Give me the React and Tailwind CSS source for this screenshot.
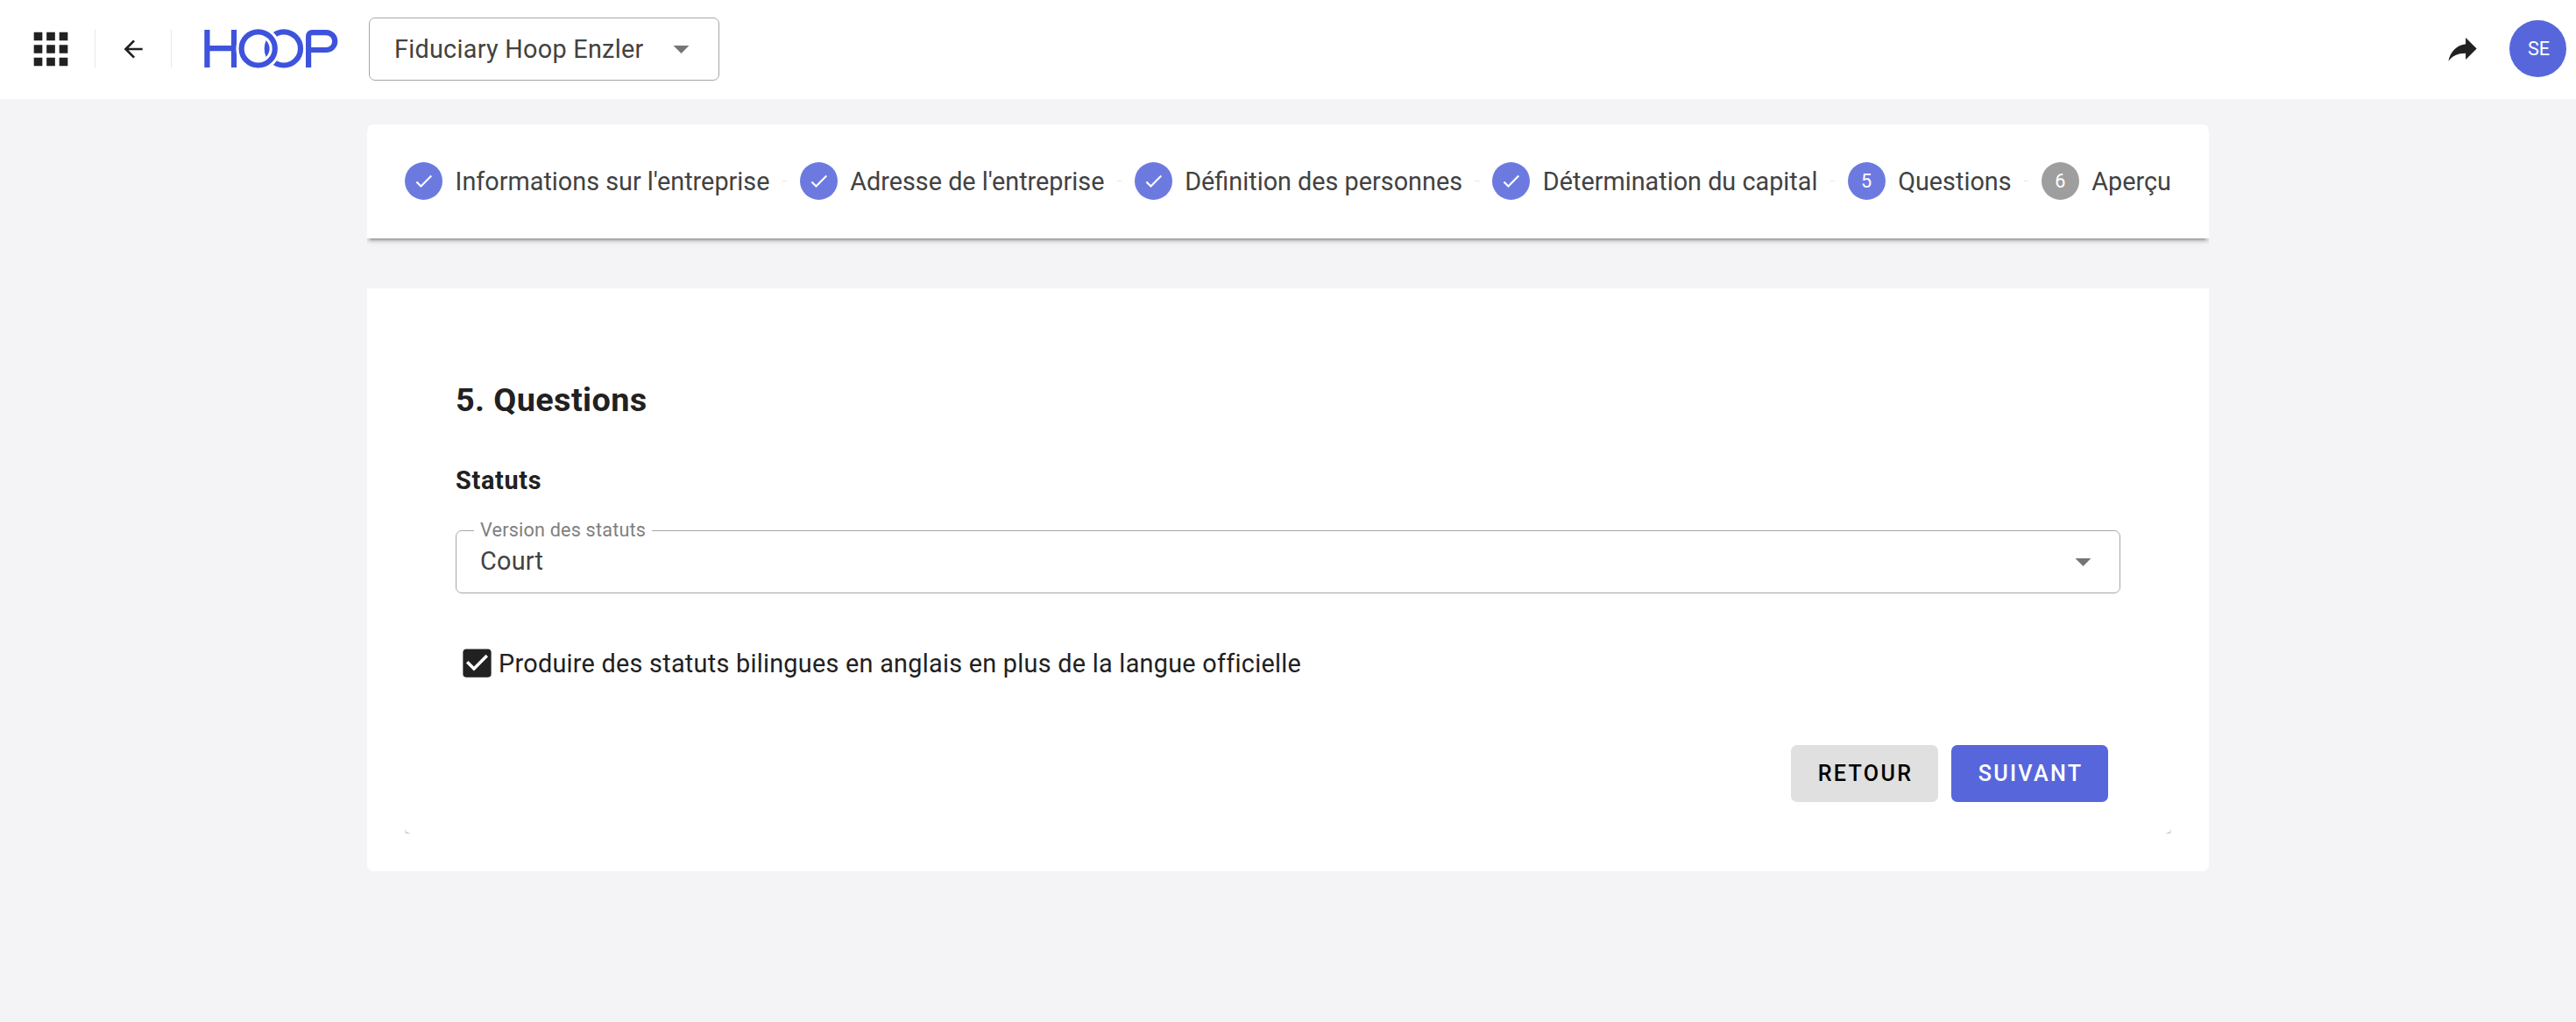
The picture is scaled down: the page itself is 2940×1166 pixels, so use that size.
import React, { useState } from 'react';

const steps = [
    { id: 1, label: "Informations sur l'entreprise", status: 'done' },
    { id: 2, label: "Adresse de l'entreprise", status: 'done' },
    { id: 3, label: 'Définition des personnes', status: 'done' },
    { id: 4, label: 'Détermination du capital', status: 'done' },
    { id: 5, label: 'Questions', status: 'active' },
    { id: 6, label: 'Aperçu', status: 'todo' },
];

const icons = {
    apps: 'M16,20H20V16H16M16,14H20V10H16M10,8H14V4H10M16,8H20V4H16M10,14H14V10H10M4,14H8V10H4M4,20H8V16H4M10,20H14V16H10M4,8H8V4H4V8Z',
    back: 'M20,11V13H8L13.5,18.5L12.08,19.92L4.16,12L12.08,4.08L13.5,5.5L8,11H20Z',
    share: 'M21,12L14,5V9C7,10 4,15 3,20C5.5,16.5 9,14.9 14,14.9V19L21,12Z',
    menuDown: 'M7,10L12,15L17,10H7Z',
    check: 'M21,7L9,19L3.5,13.5L4.91,12.09L9,16.17L19.59,5.59L21,7Z',
    checkboxOn: 'M10,17L5,12L6.41,10.58L10,14.17L17.59,6.58L19,8M19,3H5C3.89,3 3,3.89 3,5V19A2,2 0 0,0 5,21H19A2,2 0 0,0 21,19V5C21,3.89 20.1,3 19,3Z',
    checkboxOff: 'M19,3H5C3.89,3 3,3.89 3,5V19A2,2 0 0,0 5,21H19A2,2 0 0,0 21,19V5C21,3.89 20.1,3 19,3M19,5V19H5V5H19Z',
};

const Icon = ({ name, className }) => (
    <svg viewBox="0 0 24 24" className={`shrink-0 fill-current ${className}`}>
        <path d={icons[name]} />
    </svg>
);

const Logo = () => (
    <svg viewBox="0 0 153 46" fill="none" stroke="#3e53dc" strokeWidth="6.2" className="ml-[37px] w-[153px] h-[46px] shrink-0">
        <path d="M3.4 1V44M34 1V44M3.4 22.2H34" />
        <circle cx="90.9" cy="22.4" r="19.1" />
        {/* white gap where the two rings cross */}
        <circle cx="61.7" cy="22.4" r="19.1" stroke="#fff" strokeWidth="12.4" />
        <circle cx="61.7" cy="22.4" r="19.1" />
        <path d="M119.1 44V8.1A4 4 0 0 1 123.1 4.1H139.3A9.95 9.95 0 0 1 139.3 24H119.1" />
    </svg>
);

const Header = () => (
    <header className="flex items-center h-[113px] pb-[2px] bg-white text-[#212121]">
        <Icon name="apps" className="ml-[29px] w-[58px] h-[58px]" />
        <div className="ml-[21px] w-px h-[43px] bg-[#e8e8e8]" />
        <Icon name="back" className="ml-[27px] w-8 h-8" />
        <div className="ml-[27px] w-px h-[43px] bg-[#e8e8e8]" />
        <Logo />
        <button
            type="button"
            className="ml-[35px] flex items-center justify-between w-[400px] h-[72px] pl-7 pr-[21px] border border-[#a6a6a6] rounded-[7px] text-[#424242] tracking-[0.27px]"
        >
            <span>Fiduciary Hoop Enzler</span>
            <Icon name="menuDown" className="w-[43px] h-[43px] text-[#757575]" />
        </button>
        <div className="ml-auto flex items-center">
            <Icon name="share" className="w-[43px] h-[43px]" />
            <div className="ml-8 mr-[11px] pl-[2px] flex items-center justify-center w-[65px] h-[65px] rounded-full bg-[#5767db] text-white text-[21.6px]">
                SE
            </div>
        </div>
    </header>
);

const Step = ({ step }) => (
    <div className="flex items-center">
        <div
            className={`flex items-center justify-center w-[43.2px] h-[43.2px] rounded-full text-white text-[21.6px] ${step.status === 'todo' ? 'bg-[#9e9e9e]' : 'bg-[#6c7ae0]'}`}
        >
            {step.status === 'done' ? <Icon name="check" className="w-[25.2px] h-[25.2px]" /> : step.id}
        </div>
        <span className="ml-[14.4px] text-[#424242] whitespace-nowrap">{step.label}</span>
    </div>
);

const Stepper = () => (
    <div className="h-[187px] overflow-hidden rounded-t-[7px]">
        <div className="flex items-center h-[130px] px-[43px] pb-px bg-white shadow-[0_5.4px_1.8px_-3.6px_rgba(0,0,0,0.2),0_3.6px_3.6px_0_rgba(0,0,0,0.14),0_1.8px_9px_0_rgba(0,0,0,0.12)]">
            {steps.map((step, i) => (
                <React.Fragment key={step.id}>
                    {i > 0 && <div className="flex-1 h-px mx-[14.4px] bg-[#e6e6e6]" />}
                    <Step step={step} />
                </React.Fragment>
            ))}
        </div>
    </div>
);

const App = () => {
    const [bilingual, setBilingual] = useState(true);

    return (
        <div className="min-h-screen bg-[#f4f4f7] font-[Roboto,sans-serif] text-[28.8px] leading-[36px]">
            <Header />
            <main className="w-[2102px] mx-auto mt-[29px]">
                <Stepper />
                <section className="h-[665px] px-[43px] pt-[43px] bg-white rounded-b-[7px]">
                    <div className="h-[579px] overflow-hidden">
                        <div className="flex flex-col h-full px-[58px] pt-[58px] bg-white rounded-b-[7px] text-[#212121] shadow-[0_5.4px_1.8px_-3.6px_rgba(0,0,0,0.2),0_3.6px_3.6px_0_rgba(0,0,0,0.14),0_1.8px_9px_0_rgba(0,0,0,0.12)]">
                            <h1 className="text-[37.8px] leading-[52px] font-bold tracking-[0.4px]">5. Questions</h1>
                            <h2 className="mt-[48px] font-bold tracking-[0.7px]">Statuts</h2>

                            <fieldset className="mt-[28px] h-[83px] pl-[20px] border border-[#a6a6a6] rounded-[7px]">
                                <legend className="px-[7px] text-[21.6px] leading-[22px] text-[#808080] tracking-[0.2px]">
                                    Version des statuts
                                </legend>
                                <div className="flex items-center justify-between h-[48px] pl-[7px] pr-[20px] text-[#424242] tracking-[0.27px]">
                                    <span>Court</span>
                                    <Icon name="menuDown" className="w-[43px] h-[43px] text-[#757575]" />
                                </div>
                            </fieldset>

                            <label className="mt-[58px] ml-[3px] flex items-center tracking-[0.27px] cursor-pointer">
                                <input
                                    type="checkbox"
                                    className="sr-only"
                                    checked={bilingual}
                                    onChange={(e) => setBilingual(e.target.checked)}
                                />
                                <Icon name={bilingual ? 'checkboxOn' : 'checkboxOff'} className="w-[43px] h-[43px]" />
                                <span className="ml-[3px]">
                                    Produire des statuts bilingues en anglais en plus de la langue officielle
                                </span>
                            </label>

                            <div className="mt-[72px] mr-[14px] flex justify-end gap-[15px] text-[25.2px] font-medium tracking-[2.25px]">
                                <button type="button" className="w-[168px] h-[65px] pl-[2px] rounded-[7px] bg-[#e0e0e0] text-black">
                                    RETOUR
                                </button>
                                <button type="button" className="w-[179px] h-[65px] pl-[2px] rounded-[7px] bg-[#5767db] text-white">
                                    SUIVANT
                                </button>
                            </div>
                        </div>
                    </div>
                </section>
            </main>
        </div>
    );
};

export default App;
